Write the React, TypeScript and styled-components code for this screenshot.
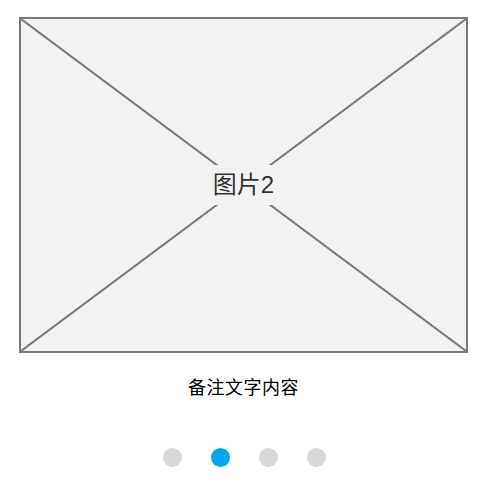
import * as React from 'react'
import styled, { createGlobalStyle } from 'styled-components'

const GlobalStyle = createGlobalStyle`
  html, body {
    margin: 0;
    padding: 0;
    background: #ffffff;
    font-family: "Liberation Sans", Arial, "Noto Sans CJK SC", sans-serif;
  }
`

const Page = styled.div`
  width: 492px;
  height: 486px;
  padding: 17px 0 0 19px;
  box-sizing: border-box;
`

const Slide = styled.div`
  position: relative;
  width: 449px;
  height: 336px;
  box-sizing: border-box;
  border: 2px solid #797979;
  background: #f2f2f2;
  display: flex;
  align-items: center;
  justify-content: center;
`

const Cross = styled.svg`
  position: absolute;
  inset: 0;
  width: 100%;
  height: 100%;
`

const SlideLabel = styled.span`
  position: relative;
  padding: 8px 3px;
  background: #f2f2f2;
  font-size: 24px;
  color: #333333;
  line-height: 24px;
`

const Caption = styled.div`
  width: 449px;
  margin-top: 24px;
  text-align: center;
  font-size: 18px;
  letter-spacing: 0.5px;
  line-height: 22px;
  color: #000000;
`

const Dots = styled.div`
  width: 449px;
  margin-top: 49px;
  display: flex;
  justify-content: center;
  gap: 29px;
  padding-left: 1px;
  box-sizing: border-box;
`

const Dot = styled.span<{ $active?: boolean }>`
  width: 19px;
  height: 19px;
  border-radius: 50%;
  background: ${(p) => (p.$active ? '#02a7f0' : '#d7d7d7')};
`

const App: React.FC = () => {
  const current = 1
  return (
    <Page>
      <GlobalStyle />
      <Slide>
        <Cross viewBox="0 0 445 332" preserveAspectRatio="none">
          <line x1="0" y1="0" x2="445" y2="332" stroke="#797979" strokeWidth="2" />
          <line x1="445" y1="0" x2="0" y2="332" stroke="#797979" strokeWidth="2" />
        </Cross>
        <SlideLabel>图片2</SlideLabel>
      </Slide>
      <Caption>备注文字内容</Caption>
      <Dots>
        {[0, 1, 2, 3].map((i) => (
          <Dot key={i} $active={i === current} />
        ))}
      </Dots>
    </Page>
  )
}

export default App
